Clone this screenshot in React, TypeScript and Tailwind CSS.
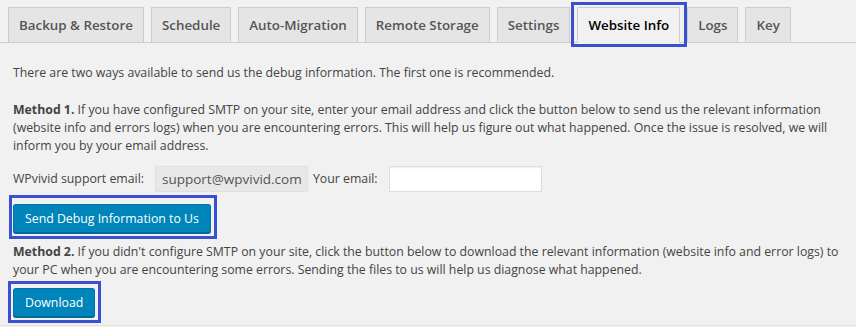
import React from 'react'

const tabs = ['Backup & Restore', 'Schedule', 'Auto-Migration', 'Remote Storage', 'Settings', 'Website Info', 'Logs', 'Key']

function Highlight({ className }: { className: string }) {
  return <span className={`pointer-events-none absolute border-[3px] border-[#3a50d0] ${className}`} />
}

export default function App() {
  return (
    <div className="w-[856px] h-[327px] overflow-hidden bg-[#f1f1f1] font-['Open_Sans',sans-serif] text-[#444]">
      <div className="flex items-end gap-[7px] pl-[8px] pt-[7px] border-b border-[#ccc]">
        {tabs.map((t) => {
          const active = t === 'Website Info'
          return (
            <div key={t} className="relative -mb-px">
              <div
                className={
                  active
                    ? 'px-[10px] py-[5px] border border-[#ccc] border-b-[#f1f1f1] bg-[#f1f1f1] text-[13.35px] leading-[24px] font-semibold text-black'
                    : 'px-[10px] py-[5px] border border-[#ccc] bg-[#e5e5e5] text-[13.35px] leading-[24px] font-semibold text-[#555]'
                }
              >
                {t}
              </div>
              {active && <Highlight className="-left-[6px] -right-[7px] -top-[5px] -bottom-[4px]" />}
            </div>
          )
        })}
      </div>

      <div className="px-[13px] pt-[21px] text-[12.3px] leading-[18px] border-b border-[#e2e2e2] h-[283px]">
        <p>There are two ways available to send us the debug information. The first one is recommended.</p>
        <p className="mt-[19px] whitespace-nowrap">
          <strong className="font-bold">Method 1.</strong> If you have configured SMTP on your site, enter your email address and click the button below to send us the relevant information
          <br />
          (website info and errors logs) when you are encountering errors. This will help us figure out what happened. Once the issue is resolved, we will
          <br />
          inform you by your email address.
        </p>

        <div className="mt-[11px] flex items-center h-[26px]">
          <span>WPvivid support email:</span>
          <div className="ml-[11px] h-[26px] w-[153px] flex items-center px-[6px] bg-[#e8e8e8] border border-[#e0e0e0] text-[13.5px] text-[#555]">
            support@wpvivid.com
          </div>
          <span className="ml-[5px]">Your email:</span>
          <input className="ml-[11px] h-[26px] w-[153px] bg-white border border-[#ddd] shadow-[inset_0_1px_2px_rgba(0,0,0,0.07)] outline-none" />
        </div>

        <div className="mt-[12px] relative inline-block">
          <button className="h-[29px] px-[11px] rounded-[3px] bg-[#0085ba] border border-[#0073aa] border-b-[#006799] shadow-[0_1px_0_#006799] text-white text-[12.3px] leading-[26px]">
            Send Debug Information to Us
          </button>
          <Highlight className="-left-[4px] -right-[6px] -top-[9px] -bottom-[6px]" />
        </div>

        <p className="mt-[10px] whitespace-nowrap">
          <strong className="font-bold">Method 2.</strong> If you didn't configure SMTP on your site, click the button below to download the relevant information (website info and error logs) to
          <br />
          your PC when you are encountering some errors. Sending the files to us will help us diagnose what happened.
        </p>

        <div className="mt-[9px] relative inline-block">
          <button className="h-[29px] px-[11px] rounded-[3px] bg-[#0085ba] border border-[#0073aa] border-b-[#006799] shadow-[0_1px_0_#006799] text-white text-[12.3px] leading-[26px]">
            Download
          </button>
          <Highlight className="-left-[5px] -right-[6px] -top-[7px] -bottom-[6px]" />
        </div>
      </div>
    </div>
  )
}
